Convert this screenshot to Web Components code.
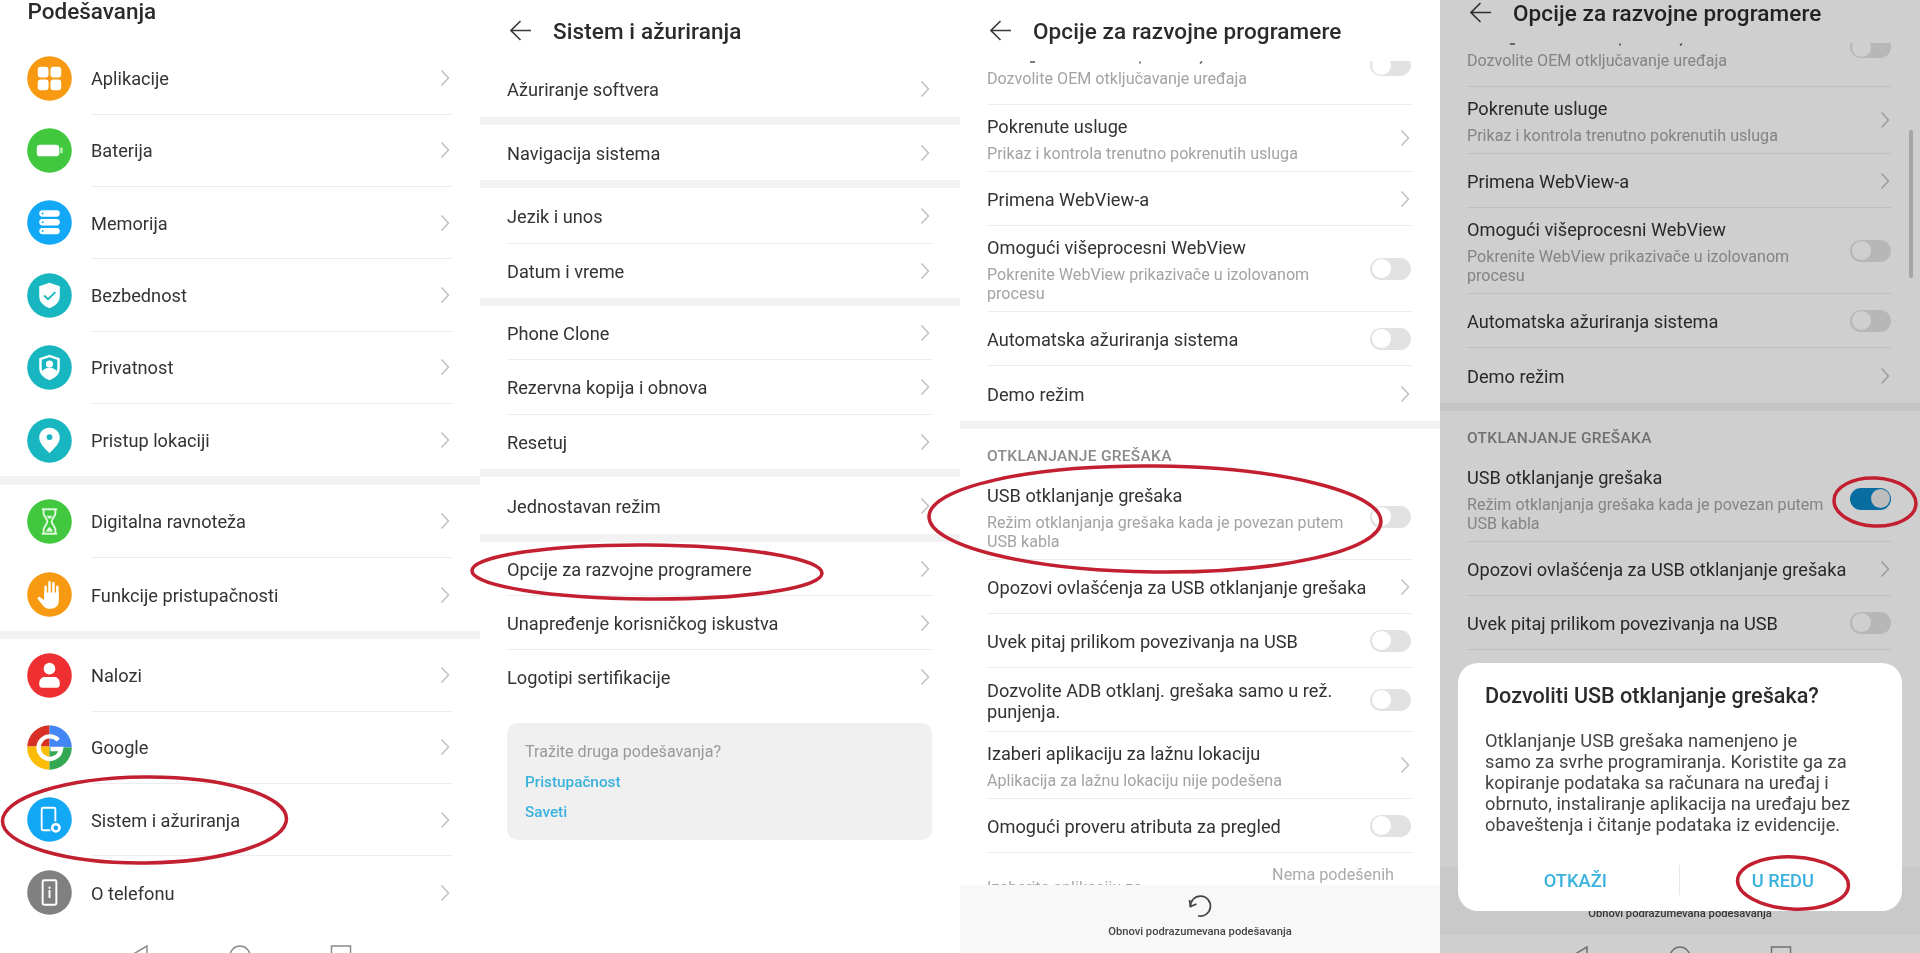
<!DOCTYPE html>
<html lang="sr">
<head>
<meta charset="utf-8">
<title>Podešavanja</title>
<style>
html,body{margin:0;padding:0;background:#fff;font-family:Roboto,"Liberation Sans",sans-serif;overflow:hidden}
</style>
</head>
<body>
<app-root></app-root>
<script>
const ICONS = {
  apps:['#f79a12','<rect x="11" y="11" width="11" height="11" rx="3" fill="#fff"/><rect x="24" y="11" width="11" height="11" rx="3" fill="#fff"/><rect x="11" y="24" width="11" height="11" rx="3" fill="#fff"/><rect x="24" y="24" width="11" height="11" rx="3" fill="#fff"/>'],
  battery:['#41c83f','<rect x="10" y="17" width="23" height="12" rx="3.5" fill="#fff"/><rect x="34" y="20" width="2.4" height="6" rx="1" fill="#c4efc3"/>'],
  storage:['#12a8f5','<rect x="12.5" y="10.5" width="21" height="6.5" rx="3.2" fill="#fff"/><rect x="12.5" y="19.5" width="21" height="6.5" rx="3.2" fill="#fff"/><rect x="12.5" y="28.5" width="21" height="6.5" rx="3.2" fill="#fff"/><circle cx="16" cy="13.7" r="1" fill="#12a8f5"/><circle cx="16" cy="22.7" r="1" fill="#12a8f5"/><circle cx="16" cy="31.7" r="1" fill="#12a8f5"/>'],
  shield:['#17b6c0','<path d="M23 10l10.5 3.5v10c0 6.5-4.5 10-10.5 12.5-6-2.5-10.5-6-10.5-12.5v-10z" fill="#fff"/><path d="M17.5 23l4 3.8 7.5-7.3" fill="none" stroke="#17b6c0" stroke-width="1.8"/>'],
  privacy:['#17b6c0','<path d="M23 10l10.5 3.5v10c0 6.5-4.5 10-10.5 12.5-6-2.5-10.5-6-10.5-12.5v-10z" fill="#fff"/><path d="M23 12.5l8 2.7v8c0 1.2-.3 2.3-.7 3.3-2-2.5-4.5-3.3-7.3-3.3s-5.3.8-7.3 3.3c-.4-1-.7-2.1-.7-3.3v-8z" fill="#17b6c0"/><circle cx="23" cy="19.5" r="3.7" fill="#fff"/>'],
  pin:['#17b6c0','<path d="M23 10c6 0 10.5 4.5 10.5 10 0 6-5.5 11-10.5 16-5-5-10.5-10-10.5-16 0-5.5 4.5-10 10.5-10z" fill="#fff"/><circle cx="23" cy="19.5" r="3" fill="#17b6c0"/>'],
  hourglass:['#41c83f','<path d="M16 10.5h14l-1 1v3c0 3.5-3.8 5.5-3.8 8.5s3.800 5 3.800 8.500v3l1 1H16l1-1v-3c0-3.500 3.800-5.500 3.800-8.500s-3.800-5-3.800-8.500v-3z" fill="none" stroke="#dcf7db" stroke-width="2" stroke-linejoin="round"/><path d="M19.500 33.500c.5-2.500 2-4 3.500-5 1.500 1 3 2.500 3.500 5z" fill="#dcf7db"/><path d="M20 17h6c-.6 1.500-2 2.500-3 3.500-1-1-2.400-2-3-3.500z" fill="#dcf7db"/>'],
  hand:['#f79a12','<path d="M19 24V15M23 23V10.500M27 23V11.500M31 25V15" stroke="#fff" stroke-width="2.6" stroke-linecap="round" fill="none"/><path d="M17.500 21h15v8.500c0 5-3.500 8-8 8h-2c-3 0-5-1.500-6.500-3.500l-5-6.500c-.8-1.300 1-2.700 2.200-1.800l4.300 2.800z" fill="#fff"/>'],
  account:['#ef3033','<circle cx="23" cy="16" r="6" fill="#fff"/><path d="M12.5 31c0-4.500 3-6.500 6-6.500h9c3 0 6 2 6 6.500v1.500c0 1.500-1 3-3 3h-15c-2 0-3-1.500-3-3z" fill="#fff"/>'],
  google:['#fff','<clipPath id="gc"><circle cx="23" cy="23" r="22.800"/></clipPath><g clip-path="url(#gc)"><rect x="0" y="0" width="23" height="22" fill="#d93025"/><rect x="23" y="0" width="23" height="23" fill="#4285f4"/><rect x="0" y="22" width="23" height="24" fill="#fbbc05"/><rect x="23" y="23" width="23" height="23" fill="#34a853"/></g><path d="M32 15.500A11.500 11.500 0 1 0 34.800 24.500H24" fill="none" stroke="#fff" stroke-width="4.500"/>'],
  system:['#12a8f5','<path d="M24 34h-7.500a1.500 1.500 0 0 1-1.500-1.500v-20a1.500 1.500 0 0 1 1.500-1.500h11a1.500 1.500 0 0 1 1.500 1.500V25" fill="none" stroke="#fff" stroke-width="1.9"/><circle cx="29.5" cy="31.5" r="3.7" fill="none" stroke="#fff" stroke-width="2.6"/>'],
  about:['#808080','<rect x="16" y="10.5" width="14" height="25" rx="1.5" fill="none" stroke="#fff" stroke-width="2"/><rect x="22" y="17" width="2" height="2.2" fill="#fff"/><rect x="22" y="20.5" width="2" height="8" fill="#fff"/>']
};

class Base extends HTMLElement{
  constructor(){super();this.attachShadow({mode:'open'});}
  connectedCallback(){ if(!this._done){this._done=true;this.shadowRoot.innerHTML=this.render();} }
}
const def=(n,fn)=>customElements.define(n,class extends Base{render(){return fn(this)}});

def('round-icon',el=>{
  const [c,inner]=ICONS[el.getAttribute('name')];
  return `<style>:host{display:block;width:45px;height:45px;flex:none}svg{display:block}</style>
  <svg width="45" height="45" viewBox="0 0 46 46"><circle cx="23" cy="23" r="22.8" fill="${c}"/>${inner}</svg>`;
});

def('set-chevron',()=>`<style>:host{display:block;flex:none;width:10px;height:18px}svg{display:block}</style>
  <svg width="10" height="18" viewBox="0 0 10 18"><path d="M1.500 1.500L8.500 9l-7 7.500" fill="none" stroke="#bdbdbd" stroke-width="1.4"/></svg>`);

def('set-toggle',el=>{
  const on=el.hasAttribute('on');
  return `<style>:host{display:block;flex:none;width:41px;height:22px;overflow:hidden}
  .t{display:flex;height:22px;box-sizing:border-box;padding:1.5px;border-radius:11px;background:${on?'#0b87c6':'#e2e2e2'};justify-content:${on?'flex-end':'flex-start'};
    margin-top:var(--shift,0)}
  .k{width:19px;height:19px;border-radius:50%;background:${on?'#e9e9e9':'#fff'}}</style>
  <div class="t"><div class="k"></div></div>`;
});

def('set-row',el=>{
  const h=el.getAttribute('h')||54, inset=el.getAttribute('inset')||27, type=el.getAttribute('type')||'chev';
  const trail= type==='chev'?'<set-chevron></set-chevron>': type==='tog'?'<set-toggle></set-toggle>': type==='on'?'<set-toggle on></set-toggle>':'';
  const line= el.hasAttribute('noline')?'':'<div class="line"></div>';
  return `<style>
  :host{display:flex;flex-direction:column;height:${h}px;flex:none;box-sizing:border-box}
  .row{flex:1;min-height:0;display:flex;align-items:center;padding:0 ${type==='chev'?30:29}px 0 27px;gap:16px}
  .txt{flex:1;min-width:0;padding-top:2px}
  .t{font-size:18.2px;line-height:var(--tl,24px);color:#333;white-space:nowrap}
  ::slotted([slot=icon]){margin-right:3px}
  .line{height:1px;background:#ededed;margin:0 28px 0 ${inset}px;flex:none}
  </style>
  <div class="row"><slot name="icon"></slot><div class="txt"><div class="t"><slot></slot></div><slot name="sub"></slot></div>${trail}</div>${line}`;
});
def('row-sub',()=>`<style>:host{display:block;font-size:16.1px;line-height:19px;color:#a3a3a3;white-space:nowrap;margin-top:5px}</style><slot></slot>`);
def('set-band',el=>`<style>:host{display:block;height:${el.getAttribute('h')||8}px;background:#f2f2f2;flex:none}</style>`);

def('panel-title',el=>`<style>
  :host{display:flex;align-items:center;height:61px;flex:none;padding:0 0 0 30px;box-sizing:border-box;gap:22px}
  svg{display:block;flex:none}
  .x{font-size:22.5px;font-weight:500;color:#2b2b2b;white-space:nowrap;letter-spacing:.1px}
  </style>
  <svg width="21" height="21" viewBox="0 0 21 21"><path d="M10.500 1L1 10.500l9.500 9.500M1 10.500h20" fill="none" stroke="#3a3a3a" stroke-width="1.6"/></svg>
  <div class="x"><slot></slot></div>`);

def('root-title',()=>`<style>:host{display:block;height:42.5px;padding-left:27.5px;box-sizing:border-box;font-size:22.5px;line-height:22px;font-weight:500;color:#2b2b2b;flex:none}</style><slot></slot>`);

def('help-box',()=>`<style>
  :host{display:block;margin:19px 28px 0 27px;height:117px;box-sizing:border-box;padding:19px 18px;background:#f0f0f0;border-radius:10px;line-height:30px}
  .q{color:#999;line-height:20px;margin-bottom:5px;font-size:16.1px}.a{color:#3ab2dd;font-weight:500;font-size:15.3px}
  </style>
  <div class="q">Tražite druga podešavanja?</div><div class="a">Pristupačnost</div><div class="a">Saveti</div>`);

def('nav-bar',el=>`<style>:host{display:flex;justify-content:center;gap:79px;padding-top:${el.getAttribute('top')||17}px;flex:none}svg{display:block;flex:none}</style>
  <svg width="22" height="22" viewBox="0 0 22 22"><path d="M19 1L2 11l17 10z" fill="none" stroke="#8c8c8c" stroke-width="1.5"/></svg>
  <svg width="22" height="22" viewBox="0 0 22 22"><circle cx="11" cy="11" r="10" fill="none" stroke="#8c8c8c" stroke-width="1.5"/></svg>
  <svg width="22" height="22" viewBox="0 0 22 22"><rect x="1.5" y="1" width="19" height="19" fill="none" stroke="#8c8c8c" stroke-width="1.5"/></svg>`);

def('reset-footer',()=>`<style>
  :host{display:flex;flex-direction:column;align-items:center;height:68px;background:#f8f8f8;flex:none;box-sizing:border-box;padding-top:9px}
  svg{display:block}
  .x{font-size:11.2px;font-weight:500;color:#444;line-height:14px;margin-top:7px;white-space:nowrap}
  </style>
  <svg width="24" height="24" viewBox="0 0 24 24"><path d="M2.500 13A10 10 0 1 1 10 21.800" fill="none" stroke="#444" stroke-width="1.7"/><path d="M1.500 6l1 6.500 6-2.500" fill="none" stroke="#444" stroke-width="1.7"/></svg>
  <div class="x">Obnovi podrazumevana podešavanja</div>`);

def('clipped-row',()=>`<style>
  :host{display:flex;flex-direction:column;height:44px;flex:none}
  .tips{height:5px;flex:none;display:block}
  .row{flex:1;display:flex;padding:0 29px 0 27px;justify-content:space-between;align-items:flex-start}
  .s{font-size:16.1px;line-height:19px;color:#a3a3a3;white-space:nowrap;margin-top:3px}
  .tog{width:41px;height:15px;overflow:hidden;--shift:-7px;margin-top:-5px}
  .line{height:1px;background:#ededed;margin:0 28px 0 27px}
  </style>
  <svg class="tips" width="420" height="5" viewBox="0 0 420 5"><path d="M70 1h5M180 .5v2M240 2.5l2-2" stroke="#555" stroke-width="1.5" fill="none"/></svg>
  <div class="row"><div class="s"><slot></slot></div><div class="tog"><set-toggle></set-toggle></div></div>
  <div class="line"></div>`);

def('section-label',()=>`<style>:host{display:block;height:45px;box-sizing:border-box;padding:17px 27px 0;font-size:15.5px;line-height:20px;font-weight:500;color:#8a8a8a;letter-spacing:.3px;flex:none;white-space:nowrap}</style><slot></slot>`);

def('fade-row',()=>`<style>
  :host{display:flex;justify-content:space-between;padding:12px 46px 0 27px;flex:none;height:60px;box-sizing:border-box;color:#aaa;font-size:16.2px}
  .l{padding-top:13px;line-height:20px}.r{line-height:20px}
  </style><div class="l">Izaberite aplikaciju za</div><div class="r">Nema podešenih</div>`);

def('dev-screen',el=>{
  const modal=el.hasAttribute('modal');
  const lower = modal ? '' : `
    <set-row h="64" type="tog" style="--tl:21px">Dozvolite ADB otklanj. grešaka samo u rež.<br>punjenja.</set-row>
    <set-row h="67">Izaberi aplikaciju za lažnu lokaciju<row-sub slot="sub">Aplikacija za lažnu lokaciju nije podešena</row-sub></set-row>
    <set-row h="54" type="tog">Omogući proveru atributa za pregled</set-row>
    <fade-row></fade-row>`;
  return `<style>
  :host{display:flex;flex-direction:column;height:953px;flex:none}
  .list{flex:1;min-height:0;overflow:hidden;display:flex;flex-direction:column}
  </style>
  <panel-title>Opcije za razvojne programere</panel-title>
  <div class="list">
    <clipped-row>Dozvolite OEM otključavanje uređaja</clipped-row>
    <set-row h="67">Pokrenute usluge<row-sub slot="sub">Prikaz i kontrola trenutno pokrenutih usluga</row-sub></set-row>
    <set-row h="54">Primena WebView-a</set-row>
    <set-row h="86" type="tog">Omogući višeprocesni WebView<row-sub slot="sub">Pokrenite WebView prikazivače u izolovanom<br>procesu</row-sub></set-row>
    <set-row h="54" type="tog">Automatska ažuriranja sistema</set-row>
    <set-row h="55" noline>Demo režim</set-row>
    <set-band></set-band>
    <section-label>OTKLANJANJE GREŠAKA</section-label>
    <set-row h="86" type="${modal?'on':'tog'}">USB otklanjanje grešaka<row-sub slot="sub">Režim otklanjanja grešaka kada je povezan putem<br>USB kabla</row-sub></set-row>
    <set-row h="54">Opozovi ovlašćenja za USB otklanjanje grešaka</set-row>
    <set-row h="54" type="tog">Uvek pitaj prilikom povezivanja na USB</set-row>${lower}
  </div>
  <reset-footer></reset-footer>`;
});

def('usb-dialog',()=>`<style>
  :host{position:absolute;left:18px;right:18px;bottom:42px;height:248px;background:#fff;border-radius:20px;box-sizing:border-box;padding:20px 27px 0;display:flex;flex-direction:column}
  h2{margin:0;font-size:21.6px;line-height:26px;font-weight:500;color:#2b2b2b;white-space:nowrap}
  p{margin:21px 0 0;font-size:18.3px;line-height:21px;color:#444;white-space:nowrap}
  .btns{display:flex;margin:29px -11px 0 -13px;align-items:center;height:32px}
  .b{flex:1;text-align:center;font-size:18.3px;font-weight:500;color:#3ab2dd}
  .d{width:1px;height:30px;background:#e8e8e8}
  </style>
  <h2>Dozvoliti USB otklanjanje grešaka?</h2>
  <p>Otklanjanje USB grešaka namenjeno je<br>samo za svrhe programiranja. Koristite ga za<br>kopiranje podataka sa računara na uređaj i<br>obrnuto, instaliranje aplikacija na uređaju bez<br>obaveštenja i čitanje podataka iz evidencije.</p>
  <div class="btns"><div class="b">OTKAŽI</div><div class="d"></div><div class="b">U REDU</div></div>`);

def('phone-panel',()=>`<style>:host{display:flex;flex-direction:column;width:480px;height:953px;overflow:hidden;position:relative;background:#fff;flex:none}</style><slot></slot>`);

def('modal-scrim',()=>`<style>:host{position:absolute;inset:0;background:rgba(0,0,0,.19)}
  .sb{position:absolute;left:469px;top:130px;width:4px;height:148px;border-radius:2px;background:#a6a6a6}</style><div class="sb"></div>`);

def('annotation-ink',()=>`<style>:host{position:absolute;left:0;top:0;width:1920px;height:953px;pointer-events:none}svg{display:block}</style>
  <svg width="1920" height="953" viewBox="0 0 1920 953" fill="none" stroke="#c21f30" stroke-width="3.5">
    <ellipse cx="144.5" cy="820" rx="142" ry="43" transform="rotate(-.5 144 820)"/>
    <ellipse cx="647" cy="572" rx="175" ry="27" transform="rotate(.4 647 572)"/>
    <ellipse cx="1155" cy="519" rx="226" ry="53" transform="rotate(.6 1155 519)"/>
    <ellipse cx="1875" cy="502" rx="41" ry="24" transform="rotate(3 1875 502)"/>
    <ellipse cx="1793" cy="883" rx="55.5" ry="26" transform="rotate(3 1793 883)"/>
  </svg>`);

const mainRow=(n,t)=>`<set-row h="${t.h||72.3}" inset="91" ${t.noline?'noline':''}><round-icon slot="icon" name="${n}"></round-icon>${t.l}</set-row>`;
def('app-root',()=>`<style>:host{display:flex;width:1920px;height:953px;position:relative;overflow:hidden;font-family:Roboto,"Liberation Sans",sans-serif;filter:blur(.45px)}</style>
  <phone-panel>
    <root-title>Podešavanja</root-title>
    ${mainRow('apps',{l:'Aplikacije'})}
    ${mainRow('battery',{l:'Baterija'})}
    ${mainRow('storage',{l:'Memorija'})}
    ${mainRow('shield',{l:'Bezbednost'})}
    ${mainRow('privacy',{l:'Privatnost'})}
    ${mainRow('pin',{l:'Pristup lokaciji',noline:1,h:72.5})}
    <set-band h="9"></set-band>
    ${mainRow('hourglass',{l:'Digitalna ravnoteža',h:73})}
    ${mainRow('hand',{l:'Funkcije pristupačnosti',noline:1,h:73})}
    <set-band></set-band>
    ${mainRow('account',{l:'Nalozi'})}
    ${mainRow('google',{l:'Google'})}
    ${mainRow('system',{l:'Sistem i ažuriranja'})}
    ${mainRow('about',{l:'O telefonu',noline:1})}
    <nav-bar top="16"></nav-bar>
  </phone-panel>
  <phone-panel>
    <panel-title>Sistem i ažuriranja</panel-title>
    <set-row h="56" noline>Ažuriranje softvera</set-row>
    <set-band></set-band>
    <set-row h="55" noline>Navigacija sistema</set-row>
    <set-band></set-band>
    <set-row h="56">Jezik i unos</set-row>
    <set-row h="54" noline>Datum i vreme</set-row>
    <set-band></set-band>
    <set-row h="54">Phone Clone</set-row>
    <set-row h="55">Rezervna kopija i obnova</set-row>
    <set-row h="54" noline>Resetuj</set-row>
    <set-band></set-band>
    <set-row h="57" noline>Jednostavan režim</set-row>
    <set-band></set-band>
    <set-row h="54">Opcije za razvojne programere</set-row>
    <set-row h="54">Unapređenje korisničkog iskustva</set-row>
    <set-row h="54" noline>Logotipi sertifikacije</set-row>
    <help-box></help-box>
  </phone-panel>
  <phone-panel>
    <dev-screen></dev-screen>
  </phone-panel>
  <phone-panel>
    <dev-screen modal style="margin-top:-18px"></dev-screen>
    <nav-bar top="11"></nav-bar>
    <modal-scrim></modal-scrim>
    <usb-dialog></usb-dialog>
  </phone-panel>
  <annotation-ink></annotation-ink>`);
</script>
</body>
</html>
